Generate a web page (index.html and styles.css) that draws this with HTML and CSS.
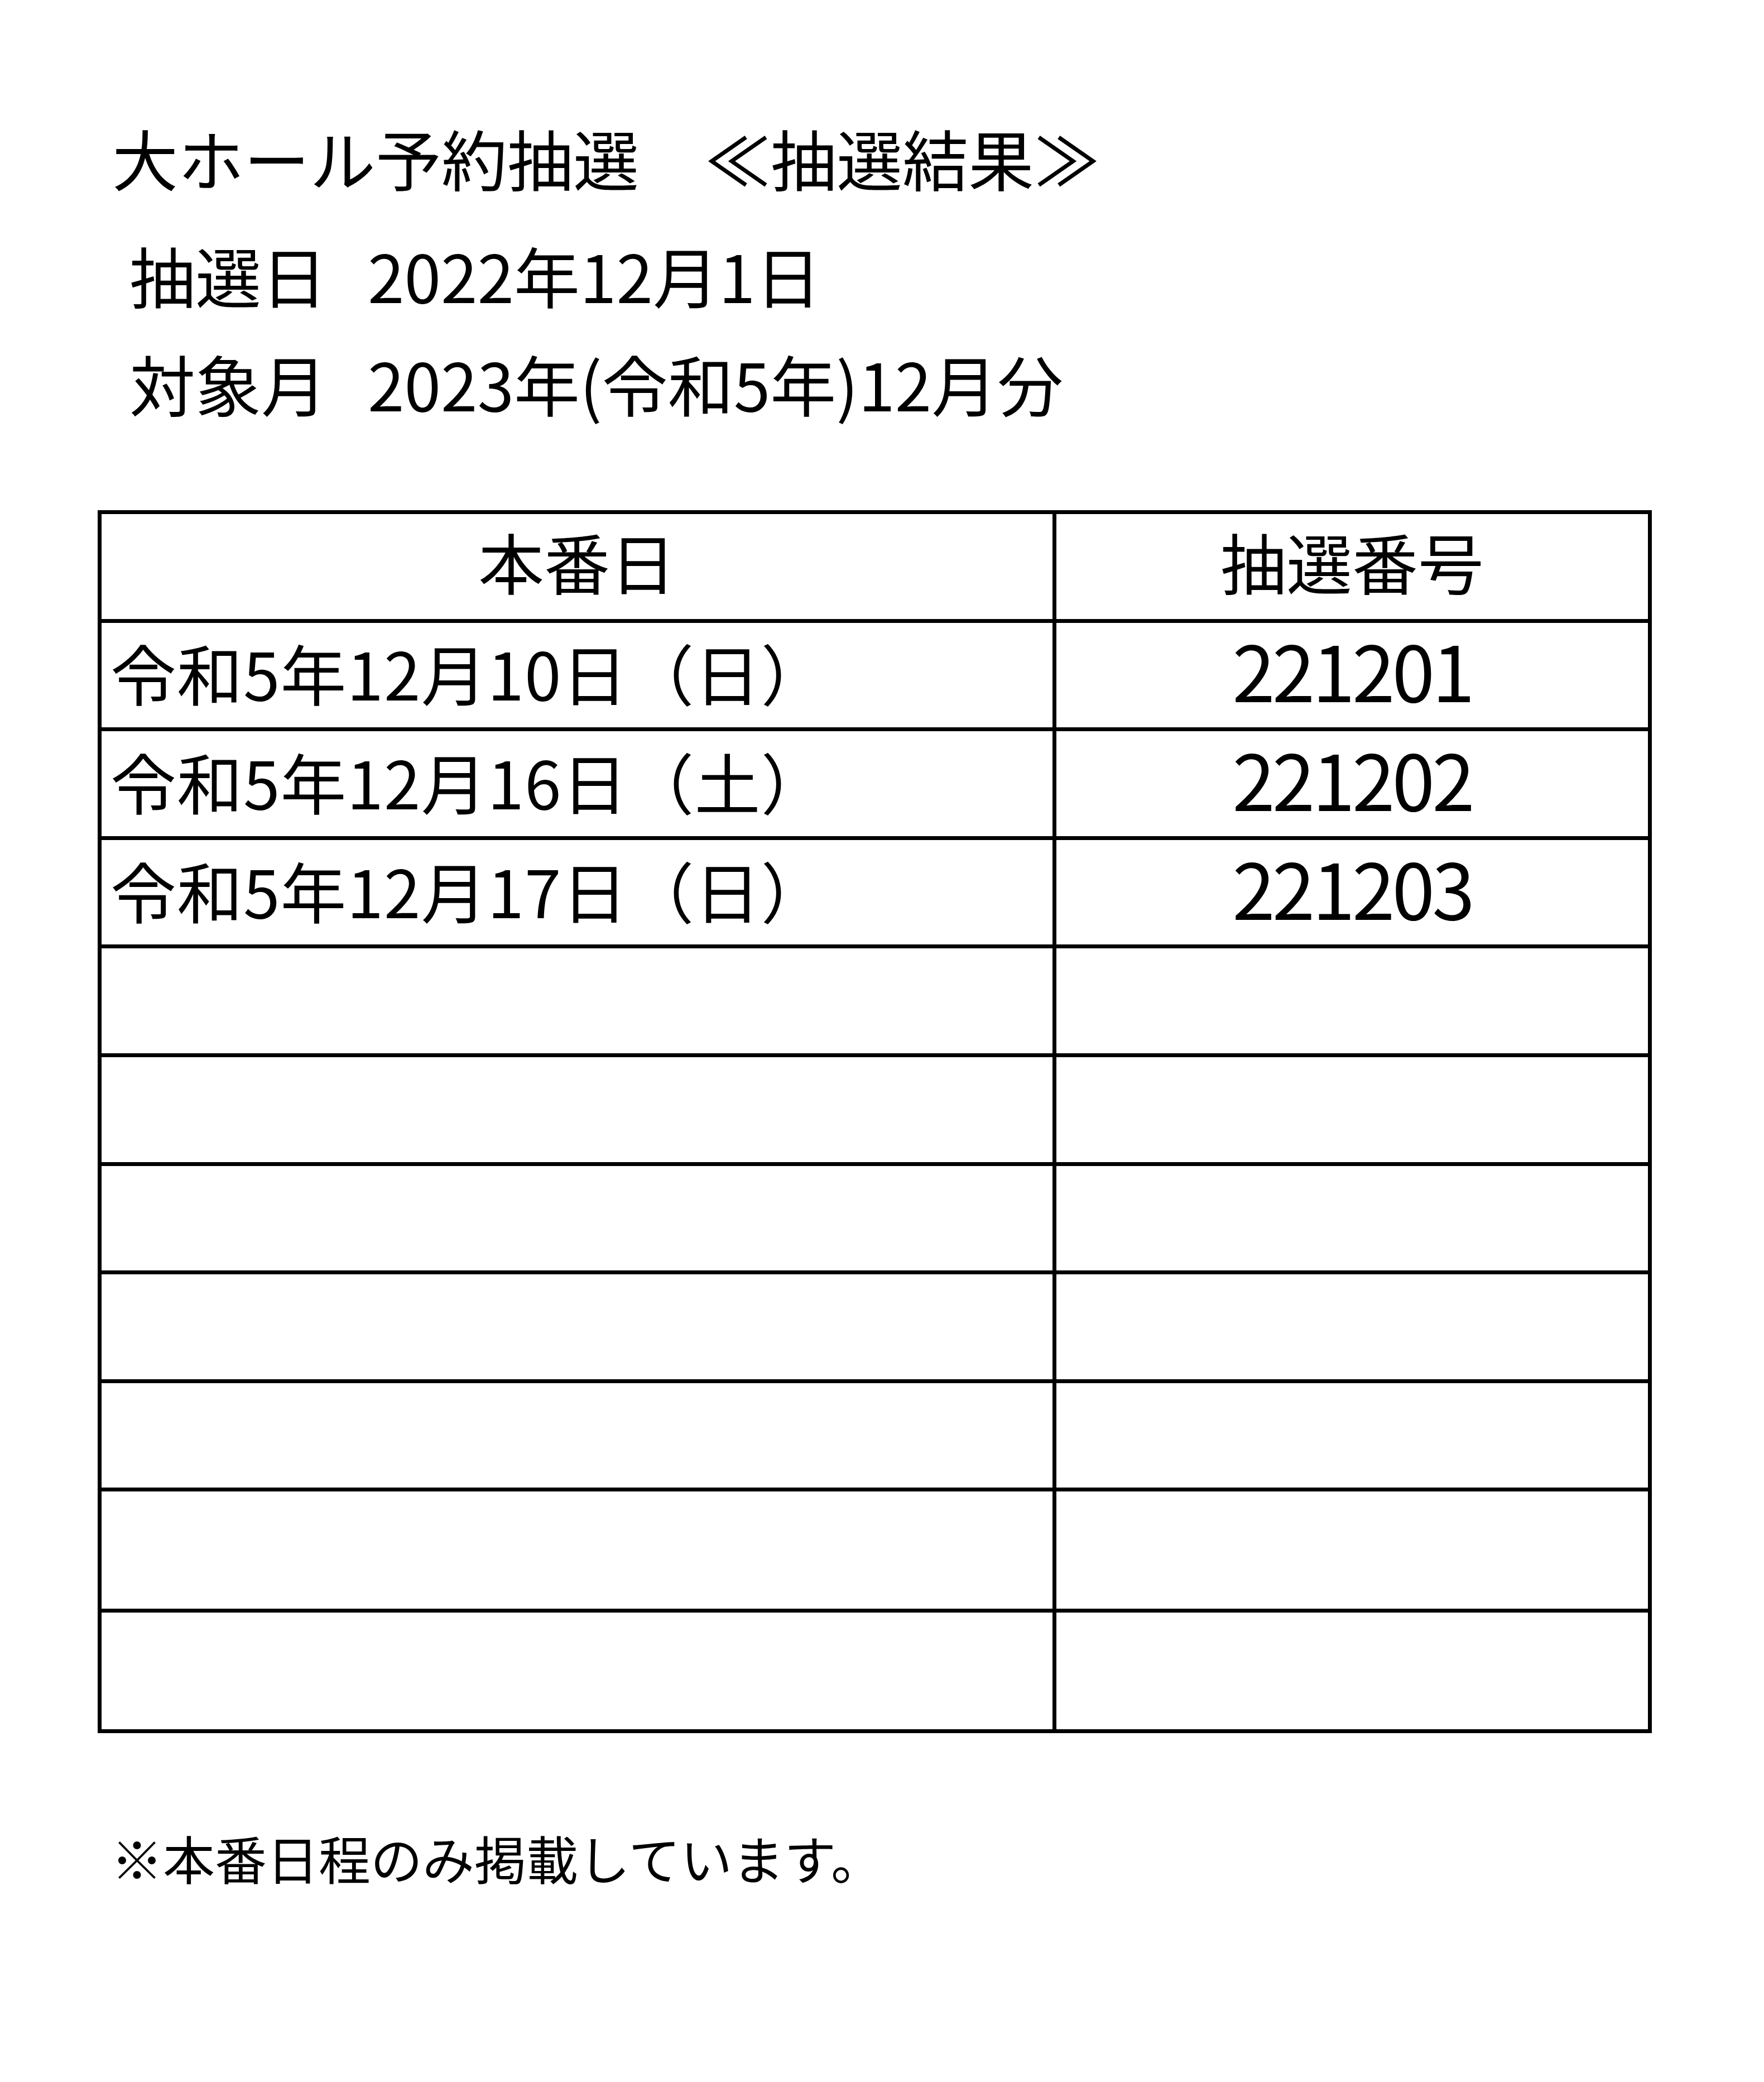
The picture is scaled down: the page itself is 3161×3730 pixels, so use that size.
FILE: index.html
```html
<!DOCTYPE html>
<html lang="ja">
<head>
<meta charset="utf-8">
<title>大ホール予約抽選 抽選結果</title>
<link rel="stylesheet" href="styles.css">
</head>
<body>
<main class="sheet">
  <h1 class="title"><span class="title-main">大ホール予約抽選</span><span class="title-sub">≪抽選結果≫</span></h1>
  <p class="info"><span class="info-label">抽選日</span><span class="info-value">2022年12月1日</span></p>
  <p class="info"><span class="info-label">対象月</span><span class="info-value">2023年(令和5年)12月分</span></p>

  <table class="result">
    <colgroup>
      <col class="col-date">
      <col class="col-num">
    </colgroup>
    <thead>
      <tr class="row">
        <th class="head">本番日</th>
        <th class="head">抽選番号</th>
      </tr>
    </thead>
    <tbody>
      <tr class="row">
        <td class="date">令和5年12月10日（日）</td>
        <td class="num">221201</td>
      </tr>
      <tr class="row">
        <td class="date">令和5年12月16日（土）</td>
        <td class="num">221202</td>
      </tr>
      <tr class="row">
        <td class="date">令和5年12月17日（日）</td>
        <td class="num">221203</td>
      </tr>
      <tr class="row"><td class="date"></td><td class="num"></td></tr>
      <tr class="row"><td class="date"></td><td class="num"></td></tr>
      <tr class="row"><td class="date"></td><td class="num"></td></tr>
      <tr class="row"><td class="date"></td><td class="num"></td></tr>
      <tr class="row"><td class="date"></td><td class="num"></td></tr>
      <tr class="row row-tall"><td class="date"></td><td class="num"></td></tr>
      <tr class="row row-tall"><td class="date"></td><td class="num"></td></tr>
    </tbody>
  </table>

  <p class="note">※本番日程のみ掲載しています。</p>
</main>
</body>
</html>
```

FILE: styles.css
```css
html, body {
  margin: 0;
  padding: 0;
  background: #ffffff;
  color: #000000;
}

body {
  font-family: "Noto Sans CJK JP", "Noto Sans CJK SC", sans-serif;
}

.sheet {
  padding: 182px 0 0 175px;
}

.title {
  margin: 0;
  padding-left: 26px;
  font-size: 118px;
  font-weight: 400;
  line-height: 200px;
  white-space: nowrap;
}

.title-sub {
  margin-left: 118px;
}

.info {
  margin: 0;
  padding-left: 57px;
  font-size: 118px;
  line-height: 194px;
  white-space: nowrap;
}

.info:first-of-type {
  margin-top: 13px;
}

.info-label {
  display: inline-block;
  width: 427px;
}

.result {
  margin-top: 131px;
  width: 2785px;
  table-layout: fixed;
  border-collapse: separate;
  border-spacing: 0;
  border-top: 7px solid #000;
  border-left: 7px solid #000;
}

.col-date {
  width: 1711px;
}

.col-num {
  width: 1067px;
}

.row {
  height: 194.6px;
}

.row-tall {
  height: 216.5px;
}

.head,
.date,
.num {
  padding: 0;
  border-right: 7px solid #000;
  border-bottom: 7px solid #000;
  vertical-align: middle;
  font-weight: 400;
  line-height: 1;
  white-space: nowrap;
}

.head {
  padding-bottom: 20px;
  font-size: 118px;
  text-align: center;
}

.date {
  padding-left: 16px;
  padding-bottom: 10px;
  font-size: 118px;
  letter-spacing: 1px;
  text-align: left;
}

.num {
  padding-bottom: 22px;
  font-size: 138px;
  letter-spacing: -5px;
  text-align: center;
}

.note {
  margin: 163px 0 0;
  padding-left: 24px;
  font-size: 93px;
  line-height: 120px;
  white-space: nowrap;
}
```
